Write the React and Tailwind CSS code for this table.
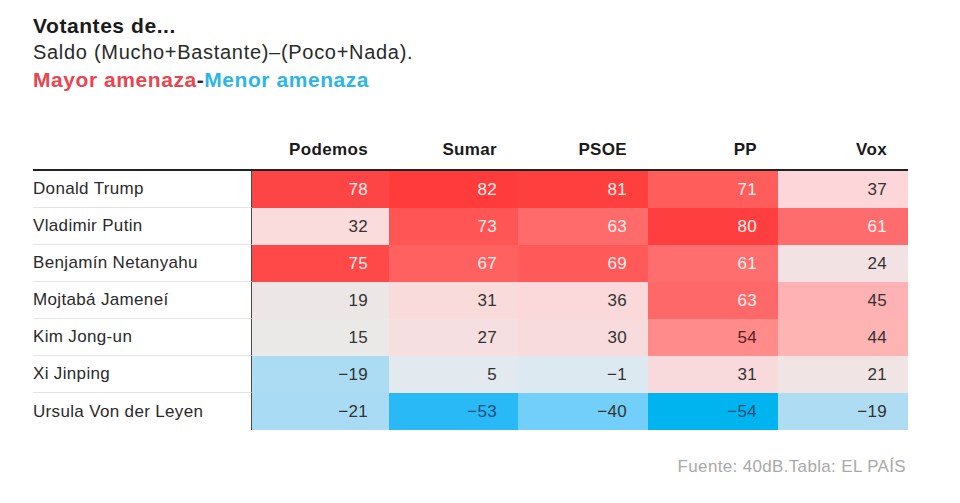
import React from 'react';

const PARTIDOS = ['Podemos', 'Sumar', 'PSOE', 'PP', 'Vox'];

const TXT_DARK = 'text-[#333333]';
const TXT_LIGHT = 'text-[#fdeeee]';
const TXT_RED = 'text-[#5a1e1e]';
const TXT_BLUE = 'text-[#1b4f78]';

// valor, fondo, color de texto
const FILAS = [
  {
    nombre: 'Donald Trump',
    celdas: [
      ['78', 'bg-[#fd4545]', TXT_LIGHT],
      ['82', 'bg-[#ff3b3b]', TXT_LIGHT],
      ['81', 'bg-[#ff3e3e]', TXT_LIGHT],
      ['71', 'bg-[#ff5c5c]', TXT_LIGHT],
      ['37', 'bg-[#fcd6d8]', TXT_DARK],
    ],
  },
  {
    nombre: 'Vladimir Putin',
    celdas: [
      ['32', 'bg-[#fbdcdd]', TXT_DARK],
      ['73', 'bg-[#ff5555]', TXT_LIGHT],
      ['63', 'bg-[#ff6a6a]', TXT_LIGHT],
      ['80', 'bg-[#ff3f3f]', TXT_LIGHT],
      ['61', 'bg-[#ff6c6e]', TXT_LIGHT],
    ],
  },
  {
    nombre: 'Benjamín Netanyahu',
    celdas: [
      ['75', 'bg-[#ff4848]', TXT_LIGHT],
      ['67', 'bg-[#ff6060]', TXT_LIGHT],
      ['69', 'bg-[#ff5959]', TXT_LIGHT],
      ['61', 'bg-[#ff6e6e]', TXT_LIGHT],
      ['24', 'bg-[#f3e2e3]', TXT_DARK],
    ],
  },
  {
    nombre: 'Mojtabá Jameneí',
    celdas: [
      ['19', 'bg-[#ece6e7]', TXT_DARK],
      ['31', 'bg-[#f9dbdc]', TXT_DARK],
      ['36', 'bg-[#fbd8d9]', TXT_DARK],
      ['63', 'bg-[#ff6868]', TXT_LIGHT],
      ['45', 'bg-[#ffb2b3]', TXT_DARK],
    ],
  },
  {
    nombre: 'Kim Jong-un',
    celdas: [
      ['15', 'bg-[#ebe8e8]', TXT_DARK],
      ['27', 'bg-[#f6dfe0]', TXT_DARK],
      ['30', 'bg-[#f8dcdd]', TXT_DARK],
      ['54', 'bg-[#ff8b8b]', TXT_RED],
      ['44', 'bg-[#ffb4b4]', TXT_DARK],
    ],
  },
  {
    nombre: 'Xi Jinping',
    celdas: [
      ['−19', 'bg-[#acdcf3]', TXT_DARK],
      ['5', 'bg-[#e2eaef]', TXT_DARK],
      ['−1', 'bg-[#dde9f0]', TXT_DARK],
      ['31', 'bg-[#f9dadc]', TXT_DARK],
      ['21', 'bg-[#f1e4e5]', TXT_DARK],
    ],
  },
  {
    nombre: 'Ursula Von der Leyen',
    celdas: [
      ['−21', 'bg-[#a9dbf4]', TXT_DARK],
      ['−53', 'bg-[#2ab9f7]', TXT_BLUE],
      ['−40', 'bg-[#71cff9]', TXT_DARK],
      ['−54', 'bg-[#00b4f0]', TXT_BLUE],
      ['−19', 'bg-[#aedcf3]', TXT_DARK],
    ],
  },
];

const COLS = 'grid grid-cols-[219px_137px_129px_130px_130px_130px]';

export default function App() {
  return (
    <div className="w-[960px] h-[503px] bg-white overflow-hidden pl-[33px] pt-[12px] font-['Liberation_Sans',Arial,sans-serif] text-[#222222]">
      <div className="tracking-[0.035em]">
        <h1 className="text-[21px] leading-[27px] font-bold text-[#1a1a1a]">Votantes de...</h1>
        <p className="text-[20px] leading-[27px] tracking-[0.035em] text-[#2a2a2a]">Saldo (Mucho+Bastante)–(Poco+Nada).</p>
        <p className="text-[21px] leading-[27px] font-bold">
          <span className="text-[#e8464f]">Mayor amenaza</span>
          <span className="text-[#2a2a2a]">-</span>
          <span className="text-[#2eb5e7]">Menor amenaza</span>
        </p>
      </div>

      <div className="w-[875px] mt-[38px] text-[17px] tracking-[0.02em]">
        <div className={`${COLS} h-[40px] items-center border-b-2 border-[#222222] font-bold text-[#1a1a1a]`}>
          <div />
          {PARTIDOS.map((p) => (
            <div key={p} className="text-right pr-[21px]">{p}</div>
          ))}
        </div>

        {FILAS.map((fila, i) => (
          <div key={fila.nombre} className={`${COLS} h-[37px]`}>
            <div
              className={`flex items-center border-r border-[#4a4a4a] text-[#2a2a2a] ${
                i < FILAS.length - 1 ? 'border-b border-b-[#e4e4e4]' : ''
              }`}
            >
              {fila.nombre}
            </div>
            {fila.celdas.map(([valor, fondo, color], j) => (
              <div key={j} className={`flex items-center justify-end pr-[21px] ${fondo} ${color}`}>
                {valor}
              </div>
            ))}
          </div>
        ))}
      </div>

      <div className="w-[873px] mt-[25px] text-right text-[17px] leading-[24px] text-[#a9a9a9] tracking-[0.02em]">
        Fuente: 40dB.Tabla: EL PAÍS
      </div>
    </div>
  );
}
